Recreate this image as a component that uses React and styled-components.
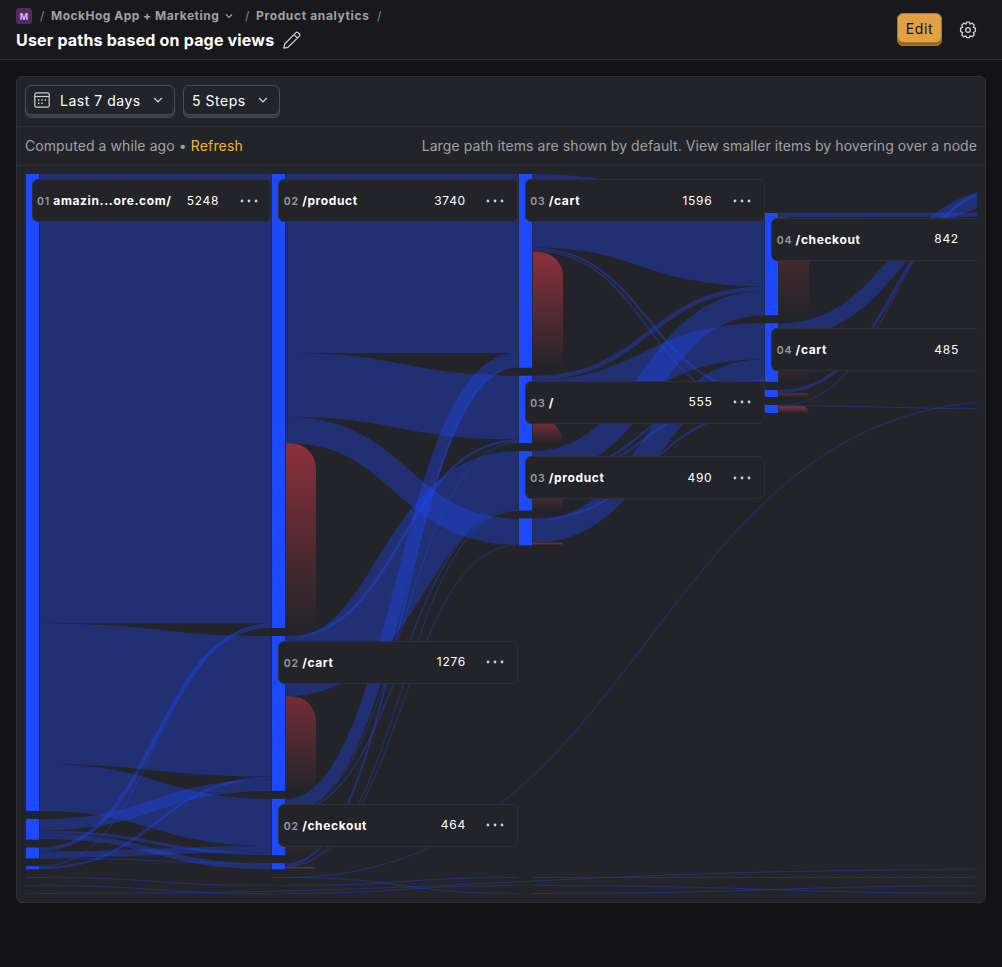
import React from 'react';
import styled, { createGlobalStyle } from 'styled-components';

const GlobalStyle = createGlobalStyle`
  * { box-sizing: border-box; }
  body {
    margin: 0;
    background: #131315;
    color: #fff;
    font-family: Inter, "Liberation Sans", sans-serif;
    font-size: 14px;
  }
`;

const Page = styled.div`
  height: 967px;
  overflow: hidden;
`;

const Header = styled.header`
  display: flex;
  justify-content: space-between;
  height: 60px;
  padding: 6px 16px 0;
  background: #19181d;
  border-bottom: 1px solid #2f3036;
`;

const Heading = styled.div`
  display: flex;
  flex-direction: column;
`;

const Crumbs = styled.nav`
  display: flex;
  align-items: center;
  height: 20px;
  font-size: 12px;
  font-weight: 700;
  color: #a1a1a1;
`;

const Lettermark = styled.span`
  display: flex;
  align-items: center;
  justify-content: center;
  width: 16px;
  height: 16px;
  border-radius: 3px;
  background: #572b5e;
  color: #e9b0f0;
  font-size: 9px;
  font-weight: 700;
`;

const Slash = styled.span`
  width: 5px;
  margin: 0 ${(p) => p.$after ?? 7}px 0 ${(p) => p.$before ?? 7}px;
  padding-bottom: 1px;
  font-weight: 400;
  color: #85858a;
`;

const Crumb = styled.span`
  width: ${(p) => p.$width}px;
  padding-bottom: 1px;
  letter-spacing: ${(p) => p.$spacing}px;
  white-space: nowrap;
`;

const CrumbChevron = styled.svg`
  width: 10px;
  height: 10px;
  margin-left: 5px;
`;

const TitleRow = styled.div`
  display: flex;
  align-items: center;
  gap: 8px;
  height: 28px;
`;

const Title = styled.h1`
  margin: 0;
  width: 259px;
  white-space: nowrap;
  font-size: 16px;
  font-weight: 700;
  letter-spacing: 0.18px;
  line-height: 28px;
`;

const Icon = styled.svg`
  flex: none;
  width: ${(p) => p.$size}px;
  height: ${(p) => p.$size}px;
`;

const Actions = styled.div`
  display: flex;
  align-items: flex-start;
  gap: 17px;
  padding: 7px 9px 0 0;
`;

const EditButton = styled.button`
  width: 45px;
  height: 33px;
  padding: 0 0 3px;
  border: 1px solid #b17816;
  border-radius: 6px;
  background: #e0a045;
  box-shadow: inset 0 -2px 0 #8f6420, inset 0 -3px 0 #b17816;
  color: #111;
  font: 400 14px Inter, sans-serif;
  letter-spacing: 0.6px;
`;

const GearWrap = styled.span`
  display: flex;
  padding-top: 8px;
`;

const Panel = styled.main`
  display: flex;
  flex-direction: column;
  height: 827px;
  margin: 16px 16px 0;
  border: 1px solid #2f3036;
  border-radius: 6px;
  background: #232429;
`;

const Toolbar = styled.div`
  display: flex;
  gap: 8px;
  height: 50px;
  padding: 8px;
  border-bottom: 1px solid #2f3036;
`;

const Select = styled.button`
  display: flex;
  align-items: center;
  justify-content: space-between;
  width: ${(p) => p.$width}px;
  height: 33px;
  padding: 0 11px 3px 8px;
  border: 1px solid #4a4b50;
  border-radius: 6px;
  background: #232429;
  box-shadow: inset 0 -2px 0 #3b3c40, inset 0 -3px 0 #4a4b50;
  color: #fff;
  font: 400 14px Inter, sans-serif;
  letter-spacing: 0.52px;
`;

const SelectLabel = styled.span`
  display: flex;
  align-items: center;
  gap: 10px;
  white-space: nowrap;
`;

const StatusBar = styled.div`
  display: flex;
  align-items: center;
  justify-content: space-between;
  height: 39px;
  padding: 0 8px 2px;
  border-bottom: 1px solid #2f3036;
  color: #a1a1a3;
  letter-spacing: 0.08px;
  white-space: nowrap;
`;

const Refresh = styled.a`
  color: #f1b32c;
  letter-spacing: 0.18px;
`;

const Canvas = styled.div`
  position: relative;
  height: 728px;
  margin: 8px 8px 0;
  overflow: hidden;
`;

const Chart = styled.svg`
  display: block;
`;

const Card = styled.div`
  position: absolute;
  left: ${(p) => p.$x}px;
  top: ${(p) => p.$y}px;
  display: flex;
  align-items: center;
  width: 239.9px;
  height: 43px;
  padding: 0 12.6px 0 4.5px;
  border: 1px solid #2f3036;
  border-radius: 6px;
  background: #232429;
  font-size: 12px;
  line-height: 16px;
`;

const Label = styled.div`
  display: flex;
  flex: 1;
  align-items: baseline;
  gap: 3.4px;
  padding-top: 2.6px;
  white-space: nowrap;
`;

const Step = styled.span`
  font-size: 10.5px;
  font-weight: 600;
  letter-spacing: 0.8px;
  color: #9b9b9e;
`;

const Name = styled.span`
  font-weight: 700;
  letter-spacing: 0.62px;
`;

const Count = styled.span`
  margin-right: 20.6px;
  padding-top: 0.2px;
  letter-spacing: 0.7px;
`;

/* Sankey geometry: evenly spaced columns of 15px wide nodes. */
const TOP = 174;
const LEFT = 25;
const COLUMN_X = [25, 271.25, 517.75, 764.25, 1011];
const CARD_X = [31.5, 278.2, 524.7, 771.2];
const NODE_WIDTH = 15;

const nodes = [
  [0, 174, 637], [0, 819, 20.5], [0, 847.5, 10.8], [0, 866.2, 3],
  [0, 877.2, 0.4], [0, 885.3, 0.25], [0, 893.3, 0.3],
  [1, 174, 454], [1, 636, 154.9], [1, 798.9, 56.3], [1, 863.2, 6],
  [1, 877.2, 0.35], [1, 885.3, 0.15], [1, 893.3, 0.15],
  [2, 174, 193.7], [2, 375.7, 67.4], [2, 451.1, 59.5], [2, 518.5, 26.8],
  [2, 885.3, 0.15], [2, 893.3, 0.1],
  [3, 213, 102.2], [3, 323.2, 58.7], [3, 390, 7], [3, 405, 8],
];

/* [source column, target column, source top, target top, thickness] */
const links = [
  [0, 1, 174, 174, 449.5],
  [0, 1, 623.5, 636, 140.5],
  [0, 1, 764, 798.9, 47],
  [0, 1, 819, 779.5, 11.4],
  [0, 1, 830.4, 852.4, 2.8],
  [0, 1, 833.4, 863.7, 5.5],
  [0, 1, 847.5, 624, 3.9],
  [0, 1, 851.4, 846, 6.3],
  [0, 1, 857.7, 863.2, 0.6],
  [0, 1, 866.2, 623.5, 0.5],
  [0, 1, 866.6, 776.6, 2.6],
  [1, 2, 174, 174, 179],
  [1, 2, 353, 375.7, 63.7],
  [1, 2, 416.7, 518.5, 26.3],
  [1, 2, 636, 439.5, 2.5],
  [1, 2, 638.5, 451.1, 57.7],
  [1, 2, 798.9, 353, 12.8],
  [1, 2, 811.7, 442.3, 0.5],
  [1, 2, 812.2, 508.8, 1.4],
  [1, 2, 863.2, 365.7, 2.1],
  [1, 2, 865.8, 510.2, 0.5],
  [1, 2, 866.3, 544.8, 0.5],
  [2, 3, 174, 213, 73.4],
  [2, 3, 247.4, 390, 2.2],
  [2, 3, 249.8, 405, 1.5],
  [2, 3, 375.7, 286.5, 4.4],
  [2, 3, 380.1, 323.2, 36],
  [2, 3, 451.1, 291, 24.2],
  [2, 3, 475.3, 379.3, 2.6],
  [2, 3, 477.9, 392.3, 2.5],
  [2, 3, 518.5, 410.5, 2.2],
  [2, 3, 520.5, 359.2, 22.2],
  [3, 4, 213, 212.5, 4.2],
  [3, 4, 323.2, 188.5, 15],
  [3, 4, 390, 186, 3],
  [3, 4, 405, 184.5, 0.8],
  [3, 4, 405.6, 408.6, 0.6],
  [0, 1, 877.2, 885.3, 0.6],
  [0, 1, 885.3, 893.3, 0.6],
  [0, 4, 893.2, 869.2, 0.6],
  [1, 4, 877.2, 400.5, 0.6],
  [1, 2, 877.2, 893.2, 0.6],
  [1, 2, 885.3, 877.2, 0.6],
  [1, 2, 893.2, 885.3, 0.6],
  [2, 4, 877.2, 877.2, 0.6],
  [2, 4, 885.3, 893.2, 0.6],
  [2, 4, 893.2, 885.3, 0.6],
];

/* [column, top, height, strength] */
const dropOffs = [
  [1, 443.3, 184.7, 1], [1, 696.2, 94.7, 0.78], [1, 814, 41.2, 0.6], [1, 867, 2.2, 1],
  [2, 251.8, 115.9, 1], [2, 418.5, 24.6, 1], [2, 480, 30.6, 0.9], [2, 542.8, 2.5, 1],
  [3, 217.3, 98, 0.55], [3, 338.5, 43.4, 0.5], [3, 393.2, 3.8, 0.7], [3, 406.2, 6.8, 1],
];

const cards = [
  [0, 179, '01', 'amazin...ore.com/', '5248'],
  [1, 179, '02', '/product', '3740'],
  [1, 640.7, '02', '/cart', '1276'],
  [1, 803.7, '02', '/checkout', '464'],
  [2, 179, '03', '/cart', '1596'],
  [2, 380.7, '03', '/', '555'],
  [2, 456.1, '03', '/product', '490'],
  [3, 217.7, '04', '/checkout', '842'],
  [3, 328.1, '04', '/cart', '485'],
];

const linkPath = ([from, to, top0, top1, w]) => {
  const x0 = COLUMN_X[from] + NODE_WIDTH;
  const x1 = COLUMN_X[to];
  const y0 = top0 + w / 2;
  const y1 = top1 + w / 2;
  const mid = (x0 + x1) / 2;
  return `M${x0},${y0}C${mid},${y0} ${mid},${y1} ${x1},${y1}`;
};

const dropPath = ([column, top, height]) => {
  const x = Math.round(COLUMN_X[column] + NODE_WIDTH);
  const r = Math.min(25, height);
  return `M${x},${top}h${30 - r}a${r},${r} 0 0 1 ${r},${r}v${height - r}h-30z`;
};

const Chevron = () => (
  <Icon $size={10} viewBox="0 0 10 10" fill="none" stroke="#dcdcde" strokeWidth="1.2">
    <path d="M1.2 3L5 6.8 8.8 3" />
  </Icon>
);

const Ellipsis = () => (
  <Icon $size={18} viewBox="0 0 18 18" fill="#cfcfd1">
    <circle cx="2" cy="9" r="1.4" />
    <circle cx="9" cy="9" r="1.4" />
    <circle cx="16" cy="9" r="1.4" />
  </Icon>
);

function Sankey() {
  return (
    <Chart width="952" height="728" viewBox={`${LEFT} ${TOP} 952 728`}>
      <defs>
        <linearGradient id="dropOff" x1="0" y1="0" x2="0" y2="1">
          <stop offset="0" stopColor="#8c303a" />
          <stop offset="1" stopColor="#8c303a" stopOpacity="0" />
        </linearGradient>
      </defs>
      {nodes.map(([column, y, h]) => {
        const x = Math.round(COLUMN_X[column]);
        return (
          <g key={`${column}-${y}`} fill="#1d4aff">
            <rect x={x} y={y} width={15} height={h} opacity="0.1" />
            <rect x={x + 1} y={y} width={13} height={h} />
          </g>
        );
      })}
      {dropOffs.map((d) => (
        <path key={`${d[0]}-${d[1]}`} d={dropPath(d)} fill="url(#dropOff)" opacity={d[3]} />
      ))}
      {links.map((l, i) => (
        <path
          key={i}
          d={linkPath(l)}
          fill="none"
          stroke="#1d4aff"
          strokeOpacity="0.34"
          strokeWidth={Math.max(1, l[4])}
        />
      ))}
    </Chart>
  );
}

export default function App() {
  return (
    <Page>
      <GlobalStyle />
      <Header>
        <Heading>
          <Crumbs>
            <Lettermark>M</Lettermark>
            <Slash $before={8} $after={6}>/</Slash>
            <Crumb $width={168} $spacing={0.49}>MockHog App + Marketing</Crumb>
            <CrumbChevron viewBox="0 0 10 10" fill="none" stroke="#a1a1a1" strokeWidth="1.2">
              <path d="M2 3.5l3 3 3-3" />
            </CrumbChevron>
            <Slash $before={11} $after={6}>/</Slash>
            <Crumb $width={114} $spacing={0.64}>Product analytics</Crumb>
            <Slash>/</Slash>
          </Crumbs>
          <TitleRow>
            <Title>User paths based on page views</Title>
            <Icon $size={18} viewBox="0 0 18 18" fill="none" stroke="#cfcfd1" strokeWidth="1.2" strokeLinejoin="round">
              <path d="M.8 17.2l.9-4.2L12.9 1.6a1.5 1.5 0 0 1 2.1 0l1.4 1.4a1.5 1.5 0 0 1 0 2.1L5 16.3l-4.2.9zM11 3.6L14.4 7" />
            </Icon>
          </TitleRow>
        </Heading>
        <Actions>
          <EditButton>Edit</EditButton>
          <GearWrap>
            <Icon $size={18} viewBox="0 0 18 18" fill="none" stroke="#d0d0d2" strokeWidth="1.3" strokeLinejoin="round">
              <path d="M7.6 1.2h2.8l.6 1.9 2.3-1 2 2-1 2.2 2.1.9v3.4l-2.1.9 1 2.2-2 2-2.3-.9-.6 1.9H7.6L7 14.9l-2.3.9-2-2 1-2.2-2.1-.9V7.2l2.1-.9-1-2.2 2-2 2.3 1z" />
              <circle cx="9" cy="9" r="2.3" />
            </Icon>
          </GearWrap>
        </Actions>
      </Header>
      <Panel>
        <Toolbar>
          <Select $width={150}>
            <SelectLabel>
              <Icon $size={16} viewBox="0 0 16 16" fill="none" stroke="#d0d0d2" strokeWidth="1.2">
                <rect x=".8" y=".8" width="14.4" height="14.4" rx="1.8" />
                <path d="M.8 4.5h14.4" />
                <path d="M4 8h1.4M7.3 8h1.4M10.6 8H12M4 11.3h1.4M7.3 11.3h1.4" strokeWidth="1.4" />
              </Icon>
              Last 7 days
            </SelectLabel>
            <Chevron />
          </Select>
          <Select $width={97}>
            <SelectLabel>5 Steps</SelectLabel>
            <Chevron />
          </Select>
        </Toolbar>
        <StatusBar>
          <span>
            Computed a while ago • <Refresh>Refresh</Refresh>
          </span>
          <span>Large path items are shown by default. View smaller items by hovering over a node</span>
        </StatusBar>
        <Canvas>
          <Sankey />
          {cards.map(([column, y, step, name, count]) => (
            <Card key={`${column}-${y}`} $x={CARD_X[column] - LEFT} $y={y - TOP}>
              <Label>
                <Step>{step}</Step>
                <Name>{name}</Name>
              </Label>
              <Count>{count}</Count>
              <Ellipsis />
            </Card>
          ))}
        </Canvas>
      </Panel>
    </Page>
  );
}
